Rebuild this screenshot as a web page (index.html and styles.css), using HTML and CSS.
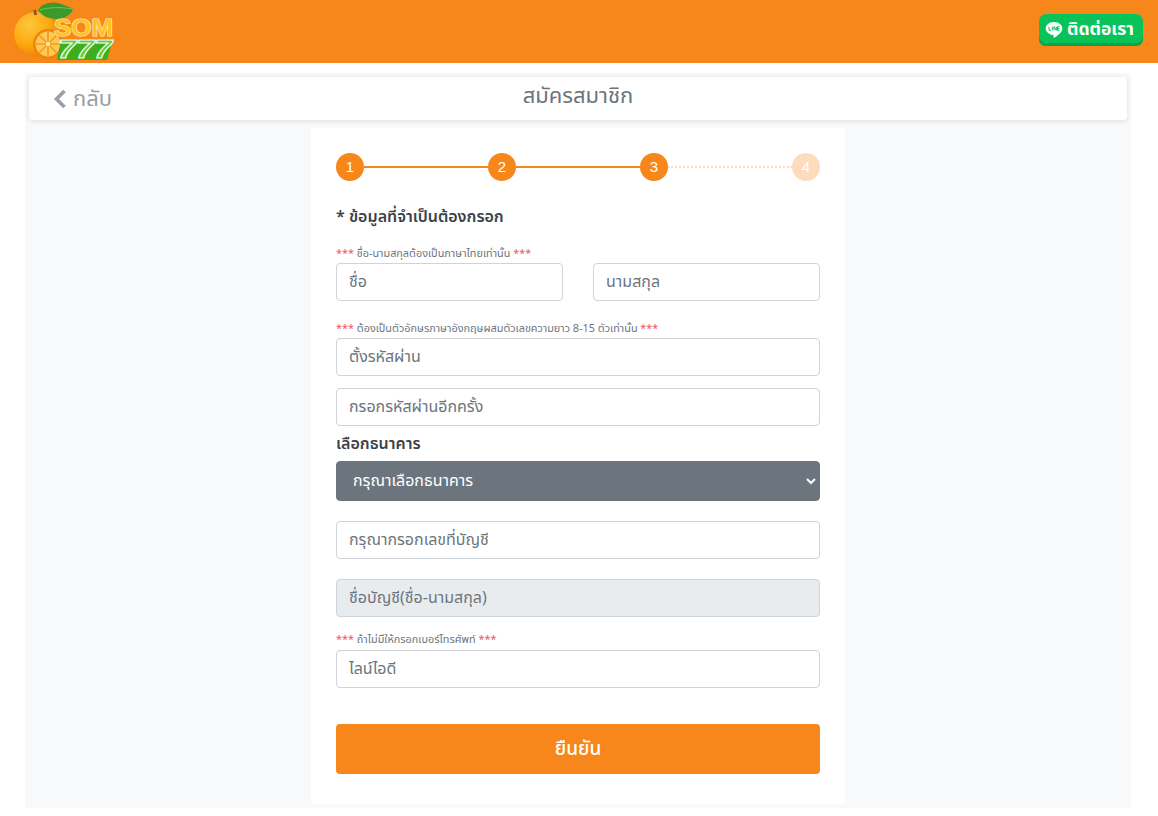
FILE: index.html
```html
<!DOCTYPE html>
<html lang="th">
<head>
  <meta charset="UTF-8">
  <meta name="viewport" content="width=device-width, initial-scale=1.0">
  <link rel="stylesheet" href="styles.css">
  <title>สมัครสมาชิก</title>
</head>
<body>
  <header class="topbar">
    <a class="logo" href="#">
      <svg width="120" height="62" viewBox="0 0 120 62">
        <defs>
          <radialGradient id="fruit" cx="35%" cy="30%" r="75%">
            <stop offset="0" stop-color="#ffc63c"/>
            <stop offset="0.6" stop-color="#fda80f"/>
            <stop offset="1" stop-color="#ee7d08"/>
          </radialGradient>
        </defs>
        <circle cx="36" cy="33" r="22.500" fill="url(#fruit)" stroke="#f2860f"/>
        <path d="M34 14l-.5-5 2.500-.5 1 5.500z" fill="#8a5a22"/>
        <path d="M38 9C41 3 50 0 58 2c6 2 12 4 15 6-2 6-9 10-17 10-8 0-15-4-18-9z" fill="#3a9a2b"/>
        <path d="M40 9c10-3 21-3 33-1" fill="none" stroke="#7cc04a" stroke-width="1"/>
        <circle cx="48" cy="43" r="15" fill="#ee8408"/>
        <circle cx="48" cy="43" r="12.500" fill="#ffc95a"/>
        <path d="M48 31v24M36 43h24M39.500 34.500l17 17M56.500 34.500l-17 17" stroke="#f59a12" stroke-width="1.600"/>
        <circle cx="48" cy="43" r="2.200" fill="#ffe6a8"/>
        <path d="M61 38h52l-6 21H57z" fill="#3fae1e"/>
        <text class="logo-som" x="54" y="35" textLength="59" lengthAdjust="spacingAndGlyphs">SOM</text>
        <text class="logo-num" x="58" y="57" textLength="54" lengthAdjust="spacingAndGlyphs">777</text>
      </svg>
    </a>
    <a class="line-btn" href="#">
      <svg width="20" height="20" viewBox="0 0 20 20">
        <path d="M10 2c4.700 0 8.300 2.900 8.300 6.600 0 3.600-4.400 7.200-8.200 9.200-.6.300-.6-.4-.5-1.200l.1-1.400C5.500 15 1.700 12.100 1.700 8.600 1.700 4.900 5.300 2 10 2z" fill="#fff"/>
        <path d="M5 6.700v3.600h2M8.300 6.700v3.600M10 10.300V6.700l2.300 3.600V6.700M15.500 6.700h-2v3.600h2M13.500 8.500h1.800" fill="none" stroke="#08bf5b" stroke-width="1"/>
      </svg>
      <span>ติดต่อเรา</span>
    </a>
  </header>

  <main class="page">
    <div class="title-bar">
      <a class="back" href="#">
        <svg width="14" height="20" viewBox="0 0 14 20">
          <path d="M11.500 2L3.500 10l8 8" fill="none" stroke="#9a9ea6" stroke-width="3.600"/>
        </svg>
        <span>กลับ</span>
      </a>
      <h1>สมัครสมาชิก</h1>
    </div>

    <form class="card">
      <div class="steps">
        <span class="step">1</span>
        <span class="line"></span>
        <span class="step">2</span>
        <span class="line"></span>
        <span class="step">3</span>
        <span class="line line-todo"></span>
        <span class="step step-todo">4</span>
      </div>

      <h2>* ข้อมูลที่จำเป็นต้องกรอก</h2>

      <p class="hint"><b>***</b> ชื่อ-นามสกุลต้องเป็นภาษาไทยเท่านั้น <b>***</b></p>
      <div class="name-row">
        <input type="text" placeholder="ชื่อ">
        <input type="text" placeholder="นามสกุล">
      </div>

      <p class="hint hint-pass"><b>***</b> ต้องเป็นตัวอักษรภาษาอังกฤษผสมตัวเลขความยาว 8-15 ตัวเท่านั้น <b>***</b></p>
      <input type="password" class="field-text" placeholder="ตั้งรหัสผ่าน">
      <input type="password" class="field-text gap-12" placeholder="กรอกรหัสผ่านอีกครั้ง">

      <label class="bank-label" for="bank">เลือกธนาคาร</label>
      <select id="bank" class="bank">
        <option>กรุณาเลือกธนาคาร</option>
      </select>

      <input type="text" class="gap-20" placeholder="กรุณากรอกเลขที่บัญชี">
      <input type="text" class="gap-20" placeholder="ชื่อบัญชี(ชื่อ-นามสกุล)" disabled>

      <p class="hint hint-line"><b>***</b> ถ้าไม่มีให้กรอกเบอร์โทรศัพท์ <b>***</b></p>
      <input type="text" placeholder="ไลน์ไอดี">

      <button type="button" class="submit">ยืนยัน</button>
    </form>
  </main>
</body>
</html>
```

FILE: styles.css
```css
body {
  margin: 0;
  background-color: #fff;
  font-family: 'Noto Sans Thai', 'Roboto', 'Noto Sans', sans-serif;
  color: #3b4148;
}

.topbar {
  height: 63px;
  display: flex;
  justify-content: space-between;
  align-items: center;
  padding: 0 15px 0 0;
  background-color: #f8871b;
}

.logo {
  display: block;
  height: 62px;
}

.logo-som {
  font-family: 'Liberation Sans', sans-serif;
  font-size: 23px;
  font-weight: bold;
  fill: #ffc21f;
  stroke: #fff0b8;
  stroke-width: 1.2px;
  paint-order: stroke;
}

.logo-num {
  font-family: 'Liberation Sans', sans-serif;
  font-size: 26px;
  font-style: italic;
  font-weight: bold;
  fill: #5fd02e;
  stroke: #fff;
  stroke-width: 1px;
}

.line-btn {
  width: 104px;
  height: 32px;
  display: flex;
  align-items: center;
  gap: 3px;
  margin-bottom: 4px;
  padding-left: 5px;
  box-sizing: border-box;
  border-radius: 7px;
  background-color: #08c358;
  box-shadow: inset 0 -3px 0 #07a54a;
  color: #fff;
  font-size: 17.500px;
  font-weight: bold;
  text-decoration: none;
  white-space: nowrap;
}

.page {
  margin: 10px 27px 0 25px;
  padding: 4px;
  background-color: #f8f9fa;
}

.title-bar {
  position: relative;
  height: 43px;
  display: flex;
  justify-content: center;
  border-radius: 4px;
  background-color: #fff;
  box-shadow: 0 1px 5px rgba(0, 0, 0, 0.12);
}

.title-bar h1 {
  margin: 6px 0 0;
  font-size: 22px;
  font-weight: normal;
  line-height: 28px;
  color: #6c757d;
}

.back {
  position: absolute;
  left: 24px;
  top: 11px;
  display: flex;
  align-items: center;
  gap: 6px;
  font-size: 22px;
  line-height: 20px;
  color: #9a9ea6;
  text-decoration: none;
}

.back span {
  margin-top: 2px;
}

.card {
  width: 484px;
  height: 651px;
  margin: 8px auto 0;
  padding: 25px 25px 0;
  display: flex;
  flex-direction: column;
  background-color: #fff;
}

.steps {
  display: flex;
  align-items: center;
  height: 28px;
}

.step {
  width: 28px;
  height: 28px;
  flex: none;
  border-radius: 50%;
  background-color: #f8871b;
  color: #fff;
  font-family: 'Liberation Sans', sans-serif;
  font-size: 15px;
  line-height: 28px;
  text-align: center;
}

.step-todo {
  background-color: #fddcbe;
}

.line {
  flex: 1;
  height: 2px;
  background-color: #f8871b;
}

.line-todo {
  height: 0;
  border-top: 2px dotted #fddcbe;
  background: none;
}

h2 {
  margin: 24px 0 0;
  height: 24px;
  font-size: 16px;
  font-weight: 600;
  line-height: 24px;
}

.hint {
  margin: 18px 0 0;
  height: 16px;
  font-size: 10.850px;
  line-height: 14px;
  color: #6c757d;
}

.hint b {
  font-weight: normal;
  color: #f25366;
}

.hint-pass {
  margin-top: 21px;
}

.hint-line {
  margin-top: 16px;
  height: 17px;
}

.name-row {
  display: flex;
  justify-content: space-between;
}

.name-row input {
  width: 227px;
}

input {
  width: 100%;
  height: 38px;
  flex: none;
  padding: 0 12px;
  box-sizing: border-box;
  border: 1px solid #ced4da;
  border-radius: 4px;
  background-color: #fff;
  font-family: inherit;
  font-size: 16px;
}

input::placeholder {
  color: #6c757d;
  opacity: 1;
}

input:disabled {
  background-color: #e9ecef;
}

.gap-12 {
  margin-top: 12px;
}

.gap-20 {
  margin-top: 20px;
}

.bank-label {
  margin-top: 6px;
  height: 29px;
  font-size: 16px;
  font-weight: 600;
  line-height: 24px;
}

.bank {
  width: 100%;
  height: 40px;
  flex: none;
  padding: 0 12px;
  border: 1px solid #6c757d;
  border-radius: 4px;
  background-color: #6c757d;
  color: #fff;
  font-family: inherit;
  font-size: 16px;
}

.submit {
  height: 50px;
  flex: none;
  margin-top: 36px;
  border: none;
  border-radius: 4px;
  background-color: #f8871b;
  color: #fff;
  font-family: inherit;
  font-size: 19px;
  font-weight: 500;
}
```
